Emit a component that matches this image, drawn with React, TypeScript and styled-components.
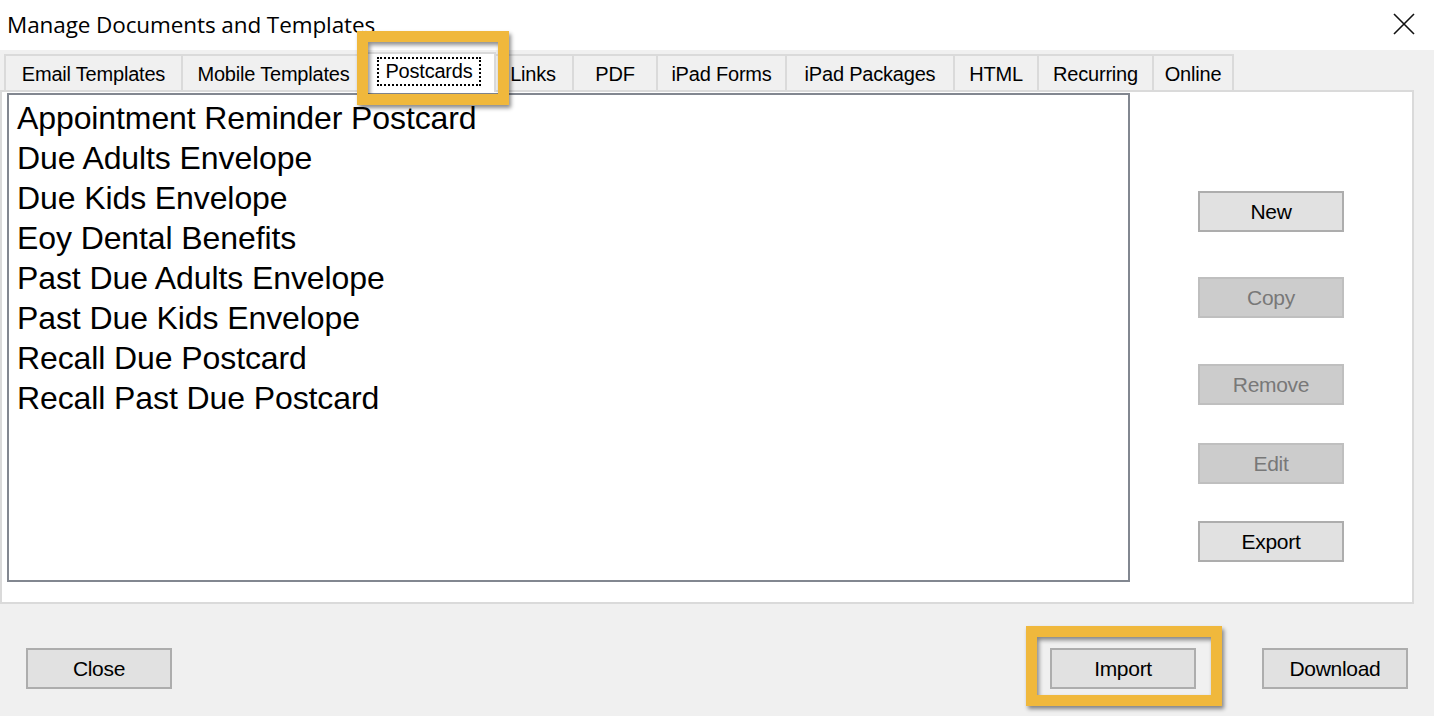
import React from 'react';
import styled, {createGlobalStyle, css} from "styled-components";

const GlobalStyle = createGlobalStyle`
  html, body {
    margin: 0;
    padding: 0;
    background: #F0F0F0;
  }
  body {
    font-family: "Liberation Sans", Arial, sans-serif;
    color: #000;
  }
`;

type TabType = { title: string, width: number, selected?: boolean };

const tabs: TabType[] = [
    {title: 'Email Templates', width: 179},
    {title: 'Mobile Templates', width: 185},
    {title: 'Postcards', width: 134, selected: true},
    {title: 'Links', width: 82},
    {title: 'PDF', width: 86},
    {title: 'iPad Forms', width: 131},
    {title: 'iPad Packages', width: 170},
    {title: 'HTML', width: 86},
    {title: 'Recurring', width: 117},
    {title: 'Online', width: 82},
];

const postcards = [
    'Appointment Reminder Postcard',
    'Due Adults Envelope',
    'Due Kids Envelope',
    'Eoy Dental Benefits',
    'Past Due Adults Envelope',
    'Past Due Kids Envelope',
    'Recall Due Postcard',
    'Recall Past Due Postcard',
];

const sideButtons = [
    {title: 'New', top: 0, disabled: false},
    {title: 'Copy', top: 45, disabled: true},
    {title: 'Remove', top: 46, disabled: true},
    {title: 'Edit', top: 38, disabled: true},
    {title: 'Export', top: 37, disabled: false},
];

const CloseIcon = () => (
    <svg width="22" height="22" viewBox="0 0 22 22">
        <path d="M1 1 L21 21 M21 1 L1 21" stroke="#111" strokeWidth="1.6" fill="none"/>
    </svg>
);

export default function App() {
    return (
        <StyledWindow>
            <GlobalStyle/>
            <TitleBar>
                <WindowTitle>Manage Documents and Templates</WindowTitle>
                <CloseButton><CloseIcon/></CloseButton>
            </TitleBar>

            <TabStrip>
                {tabs.map(t => (
                    <Tab key={t.title} $width={t.width} $selected={t.selected}>
                        {t.selected
                            ? <>
                                <FocusText>{t.title}</FocusText>
                                <Highlight $l={-7} $t={-23} $r={-15} $b={-13}/>
                            </>
                            : t.title}
                    </Tab>
                ))}
            </TabStrip>

            <TabPanel>
                <ListBox>
                    {postcards.map(p => <ListItem key={p}>{p}</ListItem>)}
                </ListBox>
                <SideColumn>
                    {sideButtons.map(b => (
                        <DialogButton key={b.title} disabled={b.disabled} $top={b.top}>
                            {b.title}
                        </DialogButton>
                    ))}
                </SideColumn>
            </TabPanel>

            <BottomBar>
                <DialogButton>Close</DialogButton>
                <Spacer/>
                <HighlightWrap>
                    <DialogButton>Import</DialogButton>
                    <Highlight $l={-24} $t={-22} $r={-26} $b={-17}/>
                </HighlightWrap>
                <DialogButton>Download</DialogButton>
            </BottomBar>
        </StyledWindow>
    );
}

const StyledWindow = styled.div`
  width: 1434px;
  height: 716px;
  display: flex;
  flex-direction: column;
  background: #F0F0F0;
  overflow: hidden;
`;
const TitleBar = styled.div`
  height: 50px;
  background: #FFF;
  display: flex;
  align-items: center;
  justify-content: space-between;
  padding: 0 19px 0 7px;
  box-sizing: border-box;
`;
const WindowTitle = styled.div`
  font-family: "Open Sans", "Liberation Sans", sans-serif;
  font-size: 22.5px;
  letter-spacing: -0.1px;
  color: #000;
  margin-top: -1px;
`;
const CloseButton = styled.div`
  display: flex;
  margin-top: -2px;
`;
const TabStrip = styled.div`
  display: flex;
  align-items: flex-end;
  height: 36px;
  margin-top: 4px;
  padding-left: 4px;
`;
const Tab = styled.div<{ $width: number, $selected?: boolean }>`
  position: relative;
  box-sizing: border-box;
  width: ${p => p.$width}px;
  height: 36px;
  margin-left: -2px;
  border: 2px solid #DADADA;
  border-bottom: none;
  background: #F0F0F0;
  display: flex;
  align-items: center;
  justify-content: center;
  padding-top: 2px;
  font-size: 20px;
  letter-spacing: -0.2px;
  color: #000;
  white-space: nowrap;

  &:first-child {
    margin-left: 0;
  }

  ${p => p.$selected && css`
    height: 40px;
    margin-left: -4px;
    margin-right: -2px;
    margin-bottom: -2px;
    background: #FFF;
    z-index: 2;
    padding-top: 0;
    padding-bottom: 4px;
  `}
`;
const FocusText = styled.span`
  border: 2px dotted #000;
  padding: 1px 6px 2px;
  line-height: 22px;
`;
const Highlight = styled.div<{ $l: number, $t: number, $r: number, $b: number }>`
  position: absolute;
  left: ${p => p.$l}px;
  top: ${p => p.$t}px;
  right: ${p => p.$r}px;
  bottom: ${p => p.$b}px;
  border: 11px solid #F0B83C;
  box-shadow: 2px 3px 4px rgba(0, 0, 0, 0.45), inset 2px 3px 4px rgba(0, 0, 0, 0.45);
  pointer-events: none;
  z-index: 3;
`;
const HighlightWrap = styled.div`
  position: relative;
  display: flex;
  margin-right: 66px;
`;
const TabPanel = styled.div`
  position: relative;
  z-index: 1;
  box-sizing: border-box;
  width: 1414px;
  height: 514px;
  background: #FFF;
  border: 2px solid #DADADA;
  display: flex;
  align-items: flex-start;
  padding: 1px 0 0 5px;
`;
const ListBox = styled.div`
  box-sizing: border-box;
  width: 1123px;
  height: 489px;
  border: 2px solid #828790;
  padding: 3px 0 0 8px;
`;
const ListItem = styled.div`
  font-size: 32px;
  letter-spacing: -0.1px;
  line-height: 40px;
  color: #000;
  white-space: nowrap;
`;
const SideColumn = styled.div`
  flex: 1;
  display: flex;
  flex-direction: column;
  align-items: center;
  padding-top: 98px;
`;
const DialogButton = styled.button<{ $top?: number }>`
  box-sizing: border-box;
  width: 146px;
  height: 41px;
  margin: ${p => p.$top ?? 0}px 0 0 0;
  padding: 0;
  border: 2px solid #ADADAD;
  background: #E1E1E1;
  font-family: "Liberation Sans", Arial, sans-serif;
  font-size: 21px;
  letter-spacing: -0.3px;
  color: #000;

  &:disabled {
    border-color: #BFBFBF;
    background: #CCCCCC;
    color: #787878;
  }
`;
const BottomBar = styled.div`
  display: flex;
  align-items: flex-start;
  padding: 44px 26px 0;
`;
const Spacer = styled.div`
  flex: 1;
`;
